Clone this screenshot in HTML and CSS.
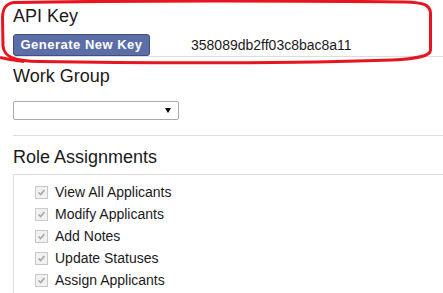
FILE: index.html
```html
<!DOCTYPE html>
<html lang="en">
<head>
  <meta charset="UTF-8">
  <meta name="viewport" content="width=device-width, initial-scale=1.0">
  <title>Account Settings</title>
  <link rel="stylesheet" href="styles.css">
</head>
<body>
  <div class="page">
    <section class="block api-block">
      <h2>API Key</h2>
      <div class="key-row">
        <button type="button" class="btn-key">Generate New Key</button>
        <span class="key-value">358089db2ff03c8bac8a11</span>
      </div>
    </section>

    <section class="block group-block">
      <h2>Work Group</h2>
      <div class="select-wrap">
        <select class="group-select">
          <option></option>
        </select>
      </div>
    </section>

    <section class="roles-block">
      <h2>Role Assignments</h2>
      <ul class="role-list">
        <li><span class="check"><svg viewBox="0 0 13 13"><path d="M3 6.5 L5.5 9 L10 3.5" /></svg></span>View All Applicants</li>
        <li><span class="check"><svg viewBox="0 0 13 13"><path d="M3 6.5 L5.5 9 L10 3.5" /></svg></span>Modify Applicants</li>
        <li><span class="check"><svg viewBox="0 0 13 13"><path d="M3 6.5 L5.5 9 L10 3.5" /></svg></span>Add Notes</li>
        <li><span class="check"><svg viewBox="0 0 13 13"><path d="M3 6.5 L5.5 9 L10 3.5" /></svg></span>Update Statuses</li>
        <li><span class="check"><svg viewBox="0 0 13 13"><path d="M3 6.5 L5.5 9 L10 3.5" /></svg></span>Assign Applicants</li>
      </ul>
    </section>

    <!-- hand drawn highlight round the api key -->
    <svg class="marker" viewBox="0 0 443 70" width="443" height="70">
      <path d="M14 2.5 C120 0.5 300 0.5 405 2 C424 2.5 430 5 430.5 13 L430.5 50 C430.5 56 418 58.5 392 60 C300 63.5 150 63.5 40 61.5 C16 61 4 58 3 46 L2.5 18 C2.5 8 6 3.5 14 2.5 Z" />
      <path d="M0 57.5 C6 59 12 60.5 24 61.5" />
    </svg>
  </div>
</body>
</html>
```

FILE: styles.css
```css
body {
  margin: 0;
  padding: 0;
  font-family: "Liberation Sans", Arial, sans-serif;
  color: #333;
  background-color: #fff;
}

.page {
  position: relative;
  padding: 6px 0 0 13px;
}

h2 {
  margin: 0;
  font-size: 18px;
  font-weight: normal;
  line-height: 20px;
  color: #1a1a1a;
}

.block {
  border-bottom: 1px solid #ddd;
}

.key-row {
  display: flex;
  align-items: center;
  margin-top: 8px;
  height: 22px;
}

.btn-key {
  width: 137px;
  height: 22px;
  padding: 0;
  border: 1px solid #3f4f80;
  border-radius: 3px;
  background-color: #5b6ea7;
  color: #fff;
  font-family: "Liberation Sans", Arial, sans-serif;
  font-size: 13px;
  font-weight: bold;
  letter-spacing: 0.5px;
  line-height: 20px;
  cursor: pointer;
}

.key-value {
  margin-left: 41px;
  font-size: 14px;
  color: #1a1a1a;
}

.group-block {
  padding: 9px 0 15px;
}

.select-wrap {
  position: relative;
  width: 166px;
  margin-top: 15px;
}

.group-select {
  display: block;
  width: 166px;
  height: 19px;
  border: 1px solid #aaa;
  border-radius: 2px;
  background-color: #fff;
  appearance: none;
  -webkit-appearance: none;
}

.select-wrap::after {
  content: "";
  position: absolute;
  right: 8px;
  top: 7px;
  border-left: 3.5px solid transparent;
  border-right: 3.5px solid transparent;
  border-top: 5px solid #000;
}

.roles-block {
  padding-top: 11px;
}

.role-list {
  list-style: none;
  margin: 7px 0 0;
  padding: 6px 0 4px 21px;
  border-top: 1px solid #ddd;
  border-left: 1px solid #ddd;
}

.role-list li {
  display: flex;
  align-items: center;
  height: 22px;
  font-size: 14px;
  color: #1a1a1a;
}

.check {
  display: inline-block;
  box-sizing: border-box;
  width: 13px;
  height: 13px;
  margin-right: 7px;
  border: 1px solid #c9c9c9;
  background-color: #f1f1f1;
}

.check svg {
  display: block;
  width: 11px;
  height: 11px;
  fill: none;
  stroke: #a8a8a8;
  stroke-width: 2;
}

.marker {
  position: absolute;
  left: 0;
  top: 0;
  pointer-events: none;
  fill: none;
  stroke: #e8141e;
  stroke-width: 3;
}
```
